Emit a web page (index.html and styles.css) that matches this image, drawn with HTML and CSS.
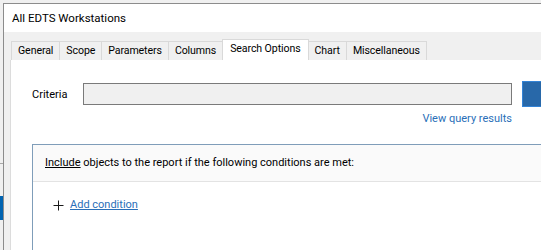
FILE: index.html
```html
<!DOCTYPE html>
<html lang="en">
<head>
    <meta charset="UTF-8">
    <title>All EDTS Workstations</title>
    <link rel="stylesheet" href="styles.css">
</head>
<body>
    <!-- strip of the app behind the dialog -->
    <div class="behind">
        <div class="behind-gap"></div>
        <div class="behind-line"></div>
        <div class="behind-gap2"></div>
        <div class="behind-sel"></div>
    </div>

    <div class="window">
        <div class="title">All EDTS Workstations</div>

        <div class="dialog">
            <div class="tabs">
                <div class="tab first">General</div>
                <div class="tab">Scope</div>
                <div class="tab">Parameters</div>
                <div class="tab">Columns</div>
                <div class="tab active">Search Options</div>
                <div class="tab">Chart</div>
                <div class="tab">Miscellaneous</div>
            </div>

            <div class="panel">
                <div class="criteria">
                    <span class="criteria-label">Criteria</span>
                    <div class="criteria-input"></div>
                    <div class="criteria-btn"></div>
                </div>
                <div class="query-row">
                    <a class="link">View query results</a>
                </div>

                <div class="conditions">
                    <div class="conditions-head">
                        <span class="u">Include</span> objects to the report if the following conditions are met:
                    </div>
                    <div class="add-row">
                        <svg class="plus" width="11" height="11" viewBox="0 0 11 11">
                            <path d="M5.5 0.5v10M0.5 5.5h10" stroke="#1a1a1a" stroke-width="1" fill="none"/>
                        </svg>
                        <a class="link u">Add condition</a>
                    </div>
                </div>
            </div>
        </div>
    </div>
</body>
</html>
```

FILE: styles.css
```css
body {
    margin: 0;
    width: 541px;
    height: 250px;
    overflow: hidden;
    display: flex;
    background: #f0f0f0;
    font-family: "Segoe UI", Roboto, sans-serif;
    font-size: 11px;
    color: #000;
}

.behind {
    width: 3px;
    flex-shrink: 0;
    display: flex;
    flex-direction: column;
}
.behind-gap { height: 163px; }
.behind-line { height: 1px; background: #a8a8a8; }
.behind-gap2 { height: 32px; }
.behind-sel { height: 24px; background: #0063b1; }

.window {
    flex: 1;
    margin-top: 3px;
    border-left: 1px solid #8c8c8c;
    border-top: 1px solid #8c8c8c;
    display: flex;
    flex-direction: column;
    min-width: 0;
    overflow: hidden;
}

.title {
    background: #fff;
    height: 29px;
    line-height: 28px;
    padding-left: 8px;
    font-size: 11.5px;
}

.dialog {
    flex: 1;
    background: #f0f0f0;
    padding: 8px 0 0 6px;
    display: flex;
    flex-direction: column;
}

/* tabs */
.tabs {
    display: flex;
    align-items: flex-end;
    height: 20px;
    padding-left: 1px;
    font-size: 10.6px;
    letter-spacing: -0.1px;
}
.tab {
    height: 18px;
    line-height: 18px;
    padding: 0 6px;
    border: 1px solid #d9d9d9;
    border-bottom: none;
    border-left: none;
    background: #f0f0f0;
}
.tab.first { border-left: 1px solid #d9d9d9; }
.tab.active {
    height: 20px;
    line-height: 17px;
    background: #fff;
    border-left: 1px solid #d9d9d9;
    margin-left: -1px;
    padding: 0 7px;
}

.panel {
    flex: 1;
    background: #fff;
    border-left: 1px solid #dcdcdc;
    padding: 21px 0 0 21px;
}

.criteria {
    display: flex;
    align-items: center;
    height: 26px;
}
.criteria-label { width: 51px; flex-shrink: 0; }
.criteria-input {
    width: 427px;
    height: 20px;
    flex-shrink: 0;
    background: #f0f0f0;
    border: 1px solid #7a7a7a;
}
.criteria-btn {
    width: 80px;
    height: 24px;
    flex-shrink: 0;
    margin-left: 10px;
    background: #2868a9;
    border: 1px solid #3383d6;
}

.query-row {
    width: 480px;
    text-align: right;
    margin-top: 5px;
    height: 20px;
}

.link {
    color: #2a6fb8;
}
.u { text-decoration: underline; }

.conditions {
    margin-top: 12px;
    height: 200px;
    border-left: 1px solid #7f9db9;
    border-top: 1px solid #7f9db9;
}
.conditions-head {
    height: 36px;
    line-height: 35px;
    padding-left: 12px;
    background: #fafafa;
    border-bottom: 1px solid #e3e3e3;
}
.conditions-head .u { text-decoration-color: #000; }

.add-row {
    display: flex;
    align-items: center;
    padding: 16px 0 0 20px;
}
.plus { margin-right: 6px; margin-top: 1px; }
```
